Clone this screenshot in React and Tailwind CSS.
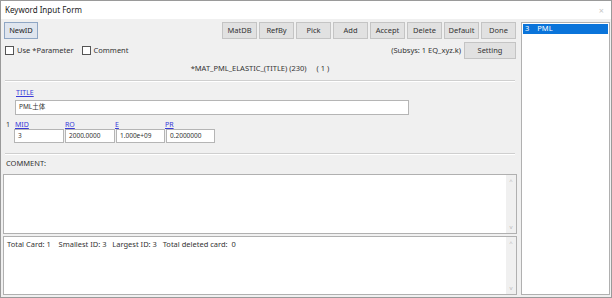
import React from 'react';

const font = { fontFamily: '"Noto Sans", "Noto Sans CJK SC", sans-serif' };

function Btn({ children, className = '' }) {
  return (
    <div
      className={`flex h-[17px] w-[35px] items-center justify-center border border-[#c4c4c4] bg-[#e1e1e1] text-[7.5px] text-[#333] ${className}`}
    >
      {children}
    </div>
  );
}

function Check({ label }) {
  return (
    <div className="flex items-center gap-[3px]">
      <div className="h-[9px] w-[9px] border border-[#555] bg-white" />
      <span className="text-[7.5px] text-[#333]">{label}</span>
    </div>
  );
}

function LinkLabel({ children, className = '' }) {
  return <span className={`text-[7px] text-[#3a3ad8] underline ${className}`}>{children}</span>;
}

function Field({ value, className = '' }) {
  return (
    <div
      className={`flex items-center border border-[#b5b5b5] bg-white px-[3px] text-[6.5px] text-[#333] ${className}`}
    >
      {value}
    </div>
  );
}

function ScrollBox({ children, className = '' }) {
  return (
    <div className={`flex border border-[#b0b0b0] bg-white ${className}`}>
      <div className="flex-1 px-[3px] pt-[4px] text-[7.5px] text-[#333]">{children}</div>
      <div className="flex w-[10px] flex-col items-center justify-between bg-[#f0f0f0] py-[3px] text-[6px] text-[#b8b8b8]">
        <span>^</span>
        <span>v</span>
      </div>
    </div>
  );
}

export default function App() {
  return (
    <div className="flex h-[298px] w-[612px] flex-col border border-[#9a9a9a] bg-[#f0f0f0] leading-none" style={font}>
      {/* title bar */}
      <div className="flex h-[18px] shrink-0 items-center justify-between bg-white pl-[4px] pr-[7px]">
        <span className="text-[8px] text-[#222]">Keyword Input Form</span>
        <span className="text-[9px] text-[#c8c8c8]">×</span>
      </div>

      <div className="flex flex-1 pb-[2px] pt-[3px]">
        {/* left panel */}
        <div className="flex w-[514px] flex-col ml-[2px]">
          <div className="flex items-center justify-between px-[1px]">
            <div className="flex h-[17px] w-[34px] items-center justify-center border border-[#8fa6c4] bg-[#dfe5ee] text-[7.5px] text-[#222]">
              NewID
            </div>
            <div className="flex gap-[2px]">
              <Btn>MatDB</Btn>
              <Btn>RefBy</Btn>
              <Btn>Pick</Btn>
              <Btn>Add</Btn>
              <Btn>Accept</Btn>
              <Btn>Delete</Btn>
              <Btn>Default</Btn>
              <Btn>Done</Btn>
            </div>
          </div>

          <div className="mt-[3px] flex h-[17px] items-center justify-between pl-[2px] pr-[1px]">
            <div className="flex gap-[8px]">
              <Check label="Use *Parameter" />
              <Check label="Comment" />
            </div>
            <div className="flex items-center gap-[3px]">
              <span className="text-[7.5px] text-[#333]">(Subsys: 1 EQ_xyz.k)</span>
              <Btn className="w-[52px]">Setting</Btn>
            </div>
          </div>

          <div className="mt-[4px] flex h-[12px] items-center justify-center gap-[10px] text-[7.5px] text-[#333]">
            <span>*MAT_PML_ELASTIC_(TITLE) (230)</span>
            <span>( 1 )</span>
          </div>

          <div className="mx-[2px] mt-[5px] border-t border-b border-t-[#cfcfcf] border-b-white" />

          <div className="mt-[6px] flex h-[8px] items-center pl-[13px]">
            <LinkLabel>TITLE</LinkLabel>
          </div>
          <div className="mt-[4px] pl-[12px]">
            <Field value="PML土体" className="h-[15px] w-[394px] border-[#8fb0d6]" />
          </div>

          <div className="mt-[5px] flex h-[8px] items-center text-[7px] text-[#333]">
            <span className="w-[12px] pl-[3px]">1</span>
            <LinkLabel className="w-[50px]">MID</LinkLabel>
            <LinkLabel className="w-[50px]">RO</LinkLabel>
            <LinkLabel className="w-[50px]">E</LinkLabel>
            <LinkLabel className="w-[50px]">PR</LinkLabel>
          </div>
          <div className="mt-[1px] flex gap-[1px] pl-[11px]">
            <Field value="3" className="h-[14px] w-[50px]" />
            <Field value="2000.0000" className="h-[14px] w-[50px]" />
            <Field value="1.000e+09" className="h-[14px] w-[49px]" />
            <Field value="0.2000000" className="h-[14px] w-[49px]" />
          </div>

          <div className="mx-[2px] mt-[10px] border-t border-b border-t-[#cfcfcf] border-b-white" />

          <div className="mt-[5px] flex h-[8px] items-center pl-[3px] text-[7.5px] text-[#333]">COMMENT:</div>

          <ScrollBox className="mt-[6px] h-[60px]" />
          <ScrollBox className="mt-[2px] flex-1">
            Total Card: 1&nbsp;&nbsp;&nbsp;&nbsp;Smallest ID: 3&nbsp;&nbsp;&nbsp;Largest ID: 3&nbsp;&nbsp;&nbsp;Total deleted card:&nbsp;&nbsp;0
          </ScrollBox>
        </div>

        {/* right list */}
        <div className="ml-[4px] mr-[1px] flex-1 border border-[#b0b0b0] bg-white p-[1px]">
          <div className="flex h-[10px] items-center gap-[8px] bg-[#0a74da] pl-[2px] text-[7.5px] text-white">
            <span>3</span>
            <span>PML</span>
          </div>
        </div>
      </div>
    </div>
  );
}
